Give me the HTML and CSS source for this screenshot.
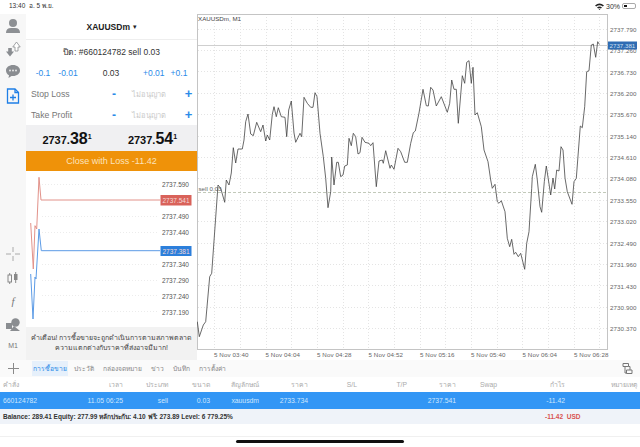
FILE: index.html
```html
<!DOCTYPE html>
<html lang="th">
<head>
<meta charset="utf-8">
<title>XAUUSDm, M1</title>
<link rel="stylesheet" href="styles.css">
</head>
<body>
<div class="status">
  <span class="status-left">13:40&nbsp; อ. 5 พ.ย.</span>
  <span class="status-right">
    <svg class="wifi" width="9" height="7" viewBox="0 0 9 7"><path d="M0 2.400Q4.500-1.200 9 2.400L7.800 3.600Q4.500 1 1.200 3.600ZM2 4.400Q4.500 2.400 7 4.400L5.900 5.400Q4.500 4.400 3.100 5.400ZM3.600 6Q4.500 5.300 5.400 6L4.500 7Z" fill="#222"/></svg>
    <span>30%</span>
    <span class="battery"><span class="battery-fill"></span></span>
  </span>
</div>
<div class="main">
  <nav class="rail">
    <div class="rail-top">
      <svg class="ico" width="16" height="16" viewBox="0 0 16 16"><circle cx="8" cy="5" r="4" fill="#8d9094"/><path d="M1 15q0-5 5-5h4q5 0 5 5z" fill="#8d9094"/></svg>
      <svg class="ico" width="16" height="16" viewBox="0 0 16 16"><path d="M5 15.500l-4-5h2.200V7h3.600v3.500H9z" fill="#8a8d91"/><path d="M11.500 1l3.700 5h-2.200v4h-3V6H7.800z" fill="#fff" stroke="#8a8d91" stroke-width=".8"/></svg>
      <svg class="ico" width="16" height="14" viewBox="0 0 16 14"><path d="M8 1c4 0 7 2.400 7 5.500S12 12 8 12l-1.500 0L3.500 14l.5-2.800C2.200 10.300 1 8.600 1 6.500 1 3.400 4 1 8 1z" fill="#8a8d91"/><circle cx="5" cy="6.500" r=".9" fill="#eee"/><circle cx="8" cy="6.500" r=".9" fill="#eee"/><circle cx="11" cy="6.500" r=".9" fill="#eee"/></svg>
      <svg class="ico" width="14" height="16" viewBox="0 0 14 16"><path d="M1.500 1h7.500l3.500 3.500v10.500h-11z" fill="none" stroke="#1f7fe6" stroke-width="1.300"/><path d="M9 1v3.500h3.500M7 6.500v6M4 9.500h6" fill="none" stroke="#1f7fe6" stroke-width="1.300"/></svg>
    </div>
    <div class="rail-bottom">
      <svg class="ico" width="14" height="14" viewBox="0 0 14 14"><path d="M7 0v5M7 9v5M0 7h5M9 7h5" stroke="#aaa" fill="none"/></svg>
      <svg class="ico" width="12" height="12" viewBox="0 0 12 12"><rect x="1" y="3" width="3.500" height="7" fill="none" stroke="#888"/><rect x="7" y="2" width="3.500" height="6" fill="#888"/><path d="M2.700 1v2M2.700 10v2M8.700 0v2M8.700 8v3" stroke="#888"/></svg>
      <span class="rail-f">f</span>
      <svg class="ico" width="15" height="13" viewBox="0 0 15 13"><rect x="0" y="5" width="6" height="6" fill="#8a8d91"/><circle cx="9.500" cy="4.500" r="4.200" fill="#8a8d91"/><path d="M4 13l4-5 6 5z" fill="#8a8d91"/></svg>
      <span class="rail-m1">M1</span>
    </div>
  </nav>

  <section class="panel">
    <header class="symbol">XAUUSDm <span class="caret">▾</span></header>
    <div class="order-title">ปิด: #660124782 sell 0.03</div>
    <div class="volume">
      <span class="blue">-0.1</span><span class="blue">-0.01</span><span class="vol-val">0.03</span><span class="blue">+0.01</span><span class="blue">+0.1</span>
    </div>
    <div class="level"><span class="level-name">Stop Loss</span><span class="step">-</span><span class="level-val">ไม่อนุญาต</span><span class="step plus">+</span></div>
    <div class="level"><span class="level-name">Take Profit</span><span class="step">-</span><span class="level-val">ไม่อนุญาต</span><span class="step plus">+</span></div>
    <div class="quotes">
      <span class="quote">2737.<b>38</b><sup>1</sup></span>
      <span class="quote">2737.<b>54</b><sup>1</sup></span>
    </div>
    <button class="close-btn">Close with Loss -11.42</button>
    <div class="tick-wrap">
      <svg class="tick" width="171" height="156" viewBox="26 172 171 156">
        <g class="grid">
          <path d="M42 185.500H158M42 217.500H158M42 233.500H158M42 265.500H158M42 281.500H158M42 296.500H158M42 312.500H158"/>
        </g>
        <g class="tick-labels">
          <text x="189" y="188">2737.590</text>
          <text x="189" y="220">2737.490</text>
          <text x="189" y="236">2737.440</text>
          <text x="189" y="252">2737.390</text>
          <text x="189" y="268">2737.340</text>
          <text x="189" y="284">2737.290</text>
          <text x="189" y="300">2737.240</text>
          <text x="189" y="316">2737.190</text>
        </g>
        <polyline class="ask" points="30.700,224 33.300,270 35,226.700 36.700,230 39,178.300 41,201 160,201"/>
        <polyline class="bid" points="30.700,275 33,320 35,278 36,280 39,230 41.300,251.700 160,251.700"/>
        <rect x="160.500" y="196" width="31" height="10.500" fill="#d9625a"/>
        <text class="tag" x="176" y="204">2737.541</text>
        <rect x="160.500" y="247" width="31" height="10" fill="#2c7fdb"/>
        <text class="tag" x="176" y="255">2737.381</text>
      </svg>
    </div>
    <div class="warning">คำเตือน! การซื้อขายจะถูกดำเนินการตามสภาพตลาด<br>ความแตกต่างกับราคาที่ส่งอาจมีมาก!</div>
  </section>

  <section class="chart-wrap">
    <svg class="chart" width="442" height="346" viewBox="198 14 442 346">
      <g class="grid">
        <path d="M199 29.500H609M199 50.500H609M199 71.500H609M199 93.500H609M199 114.500H609M199 136.500H609M199 157.500H609M199 178.500H609M199 200.500H609M199 221.500H609M199 243.500H609M199 264.500H609M199 285.500H609M199 307.500H609M199 328.500H609"/>
        <path d="M215.500 14V349M241.500 14V349M267.500 14V349M292.500 14V349M318.500 14V349M344.500 14V349M369.500 14V349M395.500 14V349M421.500 14V349M446.500 14V349M472.500 14V349M498.500 14V349M523.500 14V349M549.500 14V349M575.500 14V349M600.500 14V349"/>
      </g>
      <rect class="frame" x="198.500" y="14.500" width="410" height="335"/>
      <path class="price-line" d="M199 45.500H609"/>
      <path class="sell-line" d="M199 192.500H609"/>
      <text class="chart-title" x="199" y="21">XAUUSDm, M1</text>
      <text class="sell-label" x="199.500" y="191">sell 0.03</text>
      <polyline class="series" points="198.300,321.700 200.300,336.700 204.300,325 206.700,321.700 210.700,276.700 212.700,273.300 219,185 221.700,188.300 225.700,202.300 227.300,180 230,185 232.300,173 234.300,147.700 236.700,163 239,149 243.300,149 245,140 246.700,121.700 249,114 251.700,134 254.300,135.700 257.700,122.300 261.700,131.700 264,125 266.700,141 268.300,135 270.700,140 273.300,114.300 275,106.700 277.300,116.700 279.300,107.700 282.300,116.700 286,117.300 287.700,136.700 289.700,110 292.300,101 295,133 296.700,142.300 301,133.300 302.700,136.700 305,97.300 308.300,103.300 311.700,107.300 314,107.300 316,92.700 318,96.700 321,133.300 324.300,156.700 326.700,178.300 329,207.700 331.700,191.700 332.700,157 335,185 337.700,162.300 339.300,162.300 341.700,176.700 344,175 345.700,166 348.300,165 350,138.300 352.300,145.700 354.300,133.300 356.700,136.700 359,154 361,152.700 363,137.300 366,142.300 370,143.300 371.700,145.700 374,142.700 377.300,186.700 380,161 383.300,160 384.300,163.300 386.700,150.700 391,168.300 392.300,165 395,169.300 399,148.300 401.700,151.700 405.700,162.300 408.300,162.300 411.700,143.300 414.300,132.700 416.300,131 420,113 424,89.300 427.300,105.700 429.300,106 431.700,87.300 434,90 437.300,106 442.300,96.700 448.300,112.300 450.700,103.300 452.700,80 455,89.300 457.300,89.300 459.300,123.300 463.300,75.700 465.700,83.300 467.700,62.300 470,60.700 472.300,83.300 474,67.300 476,115 478.300,112.700 482.300,126.700 485,150 489,161.700 491.700,180 493.300,188.300 496,184.300 498.300,201.700 500,203.300 502.300,200.700 506,211.700 508.300,238.300 510.700,246.700 512.700,239.300 515,254.300 516.700,252.300 519.300,256.700 521.700,253.300 525.700,269.300 527.700,243.300 530,231.700 532.700,188.300 533.300,176.700 536.300,164.300 538.300,180 541,206.700 542.700,212.300 545.300,181.700 547.300,166 551.700,195 554,178 555.700,189 557.700,170 560,171 562,146.700 564,150 566,178 568.300,191.700 573,204.300 575,181.700 577.300,178.300 581.300,126 583.300,127.700 585.700,106.700 587.700,71.700 590,70.700 592.300,45 594.300,44 596.700,57.300 598.700,41.700 600.300,44.300"/>
      <g class="axis">
        <text x="611" y="32">2737.790</text><text x="611" y="53">2737.260</text><text x="611" y="74.500">2736.730</text><text x="611" y="96">2736.200</text><text x="611" y="117">2735.670</text><text x="611" y="138.500">2735.140</text><text x="611" y="160">2734.610</text><text x="611" y="181">2734.080</text><text x="611" y="202.500">2733.550</text><text x="611" y="224">2733.020</text><text x="611" y="245.500">2732.490</text><text x="611" y="267">2731.960</text><text x="611" y="288.500">2731.430</text><text x="611" y="310">2730.900</text><text x="611" y="331">2730.370</text>
      </g>
      <rect x="609" y="41.500" width="29" height="8" fill="#2f6cb3"/>
      <text class="axis-tag" x="610.500" y="48">2737.381</text>
      <g class="axis">
        <text x="215" y="357">5 Nov 03:40</text><text x="266.500" y="357">5 Nov 04:04</text><text x="318" y="357">5 Nov 04:28</text><text x="369.500" y="357">5 Nov 04:52</text><text x="421" y="357">5 Nov 05:16</text><text x="472" y="357">5 Nov 05:40</text><text x="523.500" y="357">5 Nov 06:04</text><text x="575" y="357">5 Nov 06:28</text>
      </g>
    </svg>
  </section>
</div>

<div class="tabs">
  <svg class="tab-plus" width="11" height="11" viewBox="0 0 11 11"><path d="M5.500 0v11M0 5.500h11" stroke="#8a8a8a" fill="none"/></svg>
  <span class="tab active">การซื้อขาย</span>
  <span class="tab">ประวัติ</span>
  <span class="tab">กล่องจดหมาย</span>
  <span class="tab">ข่าว</span>
  <span class="tab">บันทึก</span>
  <span class="tab">การตั้งค่า</span>
  <svg class="tab-link" width="11" height="11" viewBox="0 0 11 11"><path d="M1 .5h5.500v3H1zM4.500 7h5.500v3.500H4.500zM3 3.500V10h1.500M8 7V3.500H6.500" fill="none" stroke="#777"/></svg>
</div>
<div class="row head">
  <span class="left">คำสั่ง</span><span>เวลา</span><span>ประเภท</span><span>ขนาด</span><span>สัญลักษณ์</span><span>ราคา</span><span>S/L</span><span>T/P</span><span>ราคา</span><span>Swap</span><span>กำไร</span><span>หมายเหตุ</span>
</div>
<div class="row selected">
  <span class="left">660124782</span><span>11.05 06:25</span><span>sell</span><span>0.03</span><span>xauusdm</span><span>2733.734</span><span></span><span></span><span>2737.541</span><span></span><span>-11.42</span><span></span>
</div>
<div class="balance">
  <span>Balance: 289.41 Equity: 277.99 หลักประกัน: 4.10 ฟรี: 273.89 Level: 6 779.25%</span>
  <span class="total">-11.42&nbsp; USD</span>
</div>
<div class="spacer"></div>
<div class="home-area"><span class="home"></span></div>
</body>
</html>
```
FILE: styles.css
```css
* { box-sizing: border-box; }
html, body { margin: 0; padding: 0; }
body {
  width: 640px;
  height: 447px;
  overflow: hidden;
  background: #fff;
  color: #222;
  font-family: "Liberation Sans", "Noto Sans", "DejaVu Sans", sans-serif;
  display: flex;
  flex-direction: column;
}
.status {
  height: 14px;
  display: flex;
  justify-content: space-between;
  align-items: center;
  padding: 0 4px 2px 9px;
  font-size: 6.500px;
  color: #333;
}
.status-right { display: flex; align-items: center; gap: 2px; font-size: 7px; }
.battery { width: 14px; height: 6px; border: 1px solid #aaa; border-radius: 2px; padding: 1px; display: block; }
.battery-fill { display: block; width: 3px; height: 100%; background: #111; }

.main { height: 346px; display: flex; background: #f7f7f7; }
.rail { width: 26px; display: flex; flex-direction: column; justify-content: space-between; align-items: center; padding: 4px 0 10px; }
.rail-top { display: flex; flex-direction: column; align-items: center; gap: 7px; height: 100px; }
.rail-top .ico:last-child { margin-top: 3px; }
.rail-bottom { display: flex; flex-direction: column; align-items: center; gap: 11px; }
.ico { display: block; }
.rail-f { font: italic 11px/12px "Liberation Serif", serif; color: #777; }
.rail-m1 { font-size: 7px; line-height: 8px; color: #777; }

.panel { width: 171px; background: #fff; display: flex; flex-direction: column; }
.symbol { height: 26px; display: flex; align-items: center; justify-content: center; gap: 3px; font-size: 8.500px; font-weight: 700; color: #222; border-bottom: 1px solid #eee; }
.caret { font-size: 7px; font-weight: 400; }
.order-title { height: 22px; display: flex; align-items: center; justify-content: center; font-size: 8.500px; color: #333; padding-top: 1px; }
.volume { height: 21px; display: grid; grid-template-columns: 28px 22px 64px 20px 32px; padding-left: 3px; align-items: center; text-align: center; font-size: 8.500px; color: #333; }
.blue { color: #2b8be8; }
.vol-val { text-align: center; }
.level { height: 21px; display: grid; grid-template-columns: 78px 10px 63px 13px; padding-left: 5px; align-items: center; font-size: 8.700px; color: #777; }
.level-val { text-align: center; color: #c9c9c9; font-size: 7.500px; padding-right: 3px; }
.step { color: #2b8be8; font-size: 12px; font-weight: 700; text-align: center; }
.plus { font-size: 13px; }
.quotes { height: 26px; background: #f0f0f2; display: grid; grid-template-columns: 86px 85px; align-items: center; justify-items: center; padding-top: 3px; font-size: 11px; font-weight: 700; color: #111; }
.quote { display: flex; align-items: baseline; line-height: 16px; padding-right: 4px; }
.quote b { font-size: 16px; }
.quote sup { font-size: 7px; line-height: 0; position: relative; top: -5px; }
.close-btn { height: 20px; border: 0; padding: 0; background: #ef9209; color: #fbe3bd; font: 9px "Liberation Sans", sans-serif; }
.tick-wrap { height: 156px; }
.tick { display: block; }
.tick text { font-size: 6.500px; }
.tick .grid path { stroke: #ececec; }
.tick-labels text { text-anchor: end; fill: #555; }
.ask { fill: none; stroke: #e2928a; stroke-width: 1; }
.bid { fill: none; stroke: #5c9be6; stroke-width: 1; }
.tag { fill: #f4d9d6; text-anchor: middle; }
.warning { flex: 1; background: #f2f2f2; text-align: center; font-size: 7px; line-height: 10px; padding-top: 6px; color: #444; }

.chart-wrap { flex: 1; background: #fff; }
.chart { display: block; }
.grid path { stroke: #e4e4e4; stroke-width: 1; stroke-dasharray: 1 2; fill: none; }
.frame { fill: none; stroke: #c4c4c4; stroke-width: 1; }
.price-line { stroke: #cfcfcf; fill: none; }
.sell-line { stroke: #c2c9ba; stroke-dasharray: 3 2; fill: none; }
.series { fill: none; stroke: #444; stroke-width: .8; }
.chart text { font-size: 6.200px; }
.chart-title { fill: #444; }
.sell-label { fill: #666; }
.axis text { fill: #666; letter-spacing: .1px; }
.axis-tag { fill: #cfe0f2; }

.tabs { height: 17px; display: flex; align-items: center; padding: 0 7px 0 8px; font-size: 6.700px; color: #888; background: #fafafa; }
.tab-plus { margin-right: 12px; }
.tab { margin-right: 9px; }
.tab.active { background: #e6f0fb; color: #2b8be8; padding: 2px 1px; margin-left: 1px; margin-right: 6px; }
.tab-link { margin-left: auto; }
.row { display: grid; grid-template-columns: 67px 53px 45px 42px 49px 49px 49px 50px 49px 41px 68px 72px; padding-left: 3px; align-items: center; font-size: 6.800px; text-align: right; }
.row .left { text-align: left; }
.head { height: 15px; color: #aaa; background: #fff; }
.selected { height: 17px; background: #3296f5; color: #cfe6fd; }
.balance { height: 15px; display: grid; grid-template-columns: 542px auto; padding-left: 3px; align-items: center; background: #eff3f9; font-size: 6.500px; font-weight: 700; color: #333; }
.total { color: #d9534f; }
.spacer { height: 13px; border-bottom: 1px solid #f0f0f0; }
.home-area { flex: 1; display: flex; justify-content: center; align-items: flex-end; padding-bottom: 4px; background: #fff; }
.home { width: 168px; height: 3px; border-radius: 2px; background: #111; }
```
